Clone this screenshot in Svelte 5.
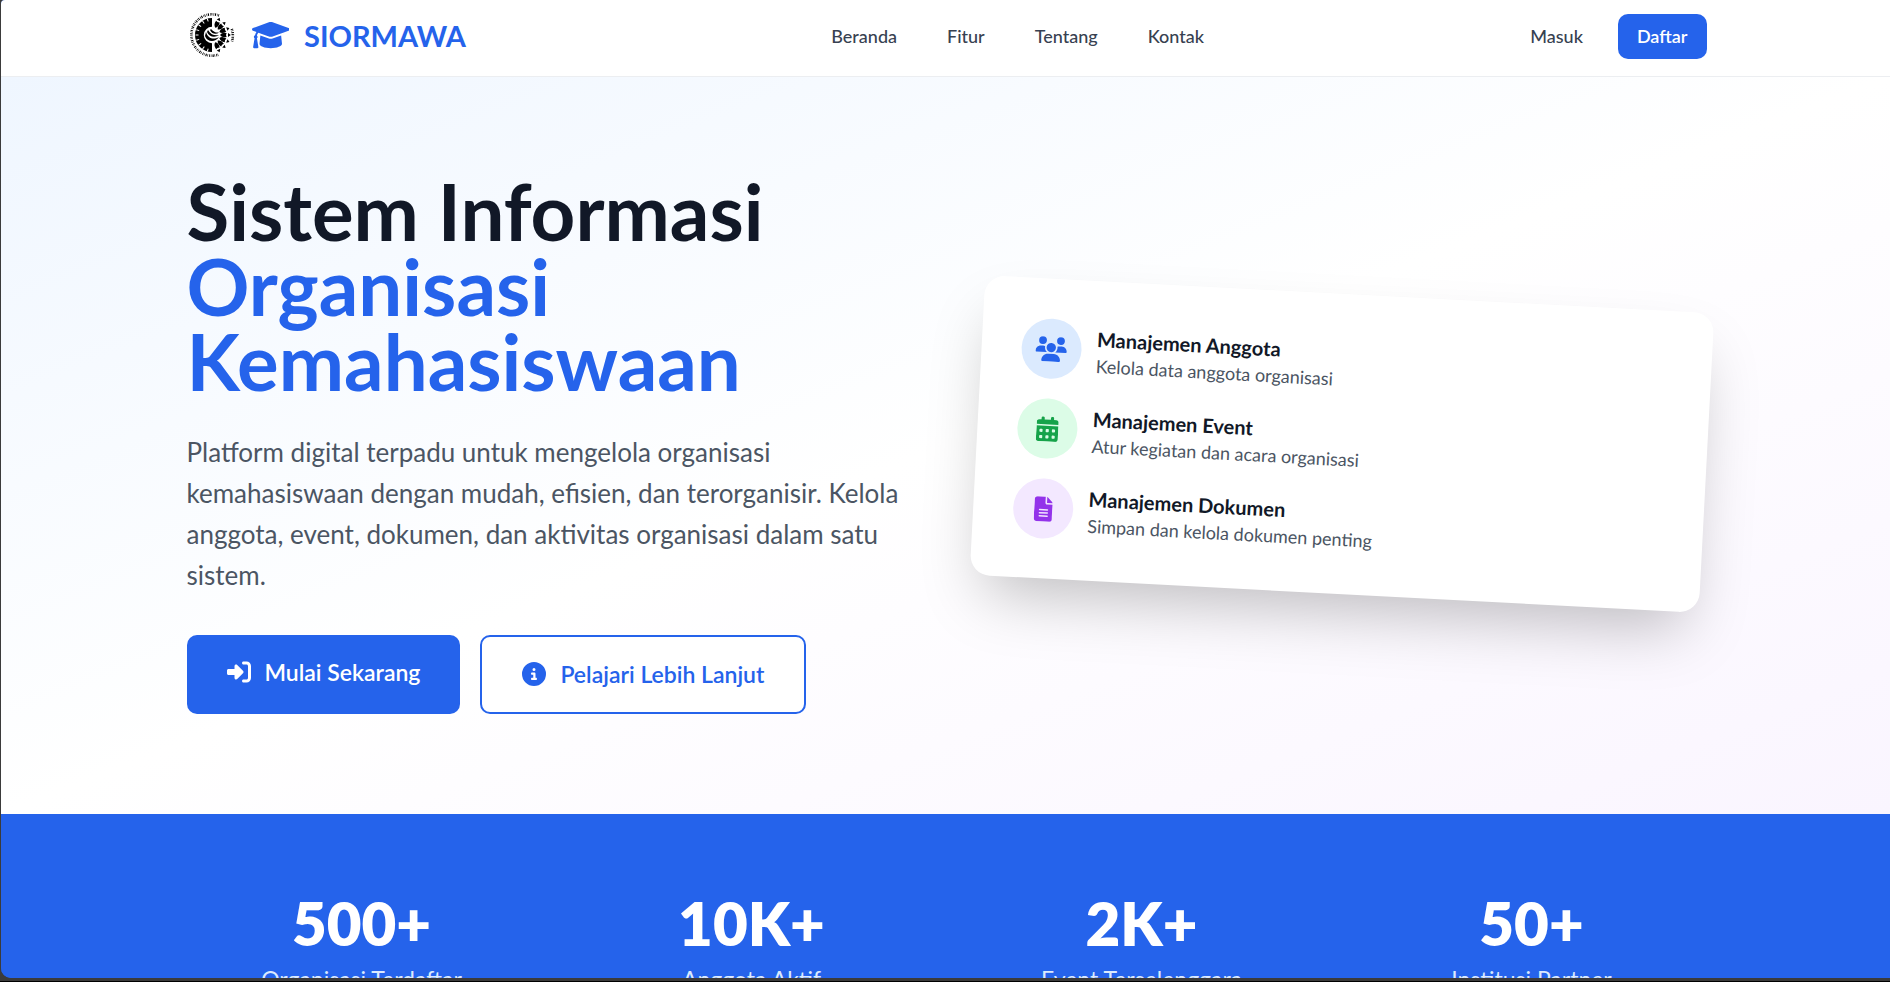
<script>
  const links = ['Beranda', 'Fitur', 'Tentang', 'Kontak'];

  const icons = {
    cap: {
      box: '0 0 640 512',
      d: 'M623.1 136.9l-282.7-101.2c-13.73-4.91-28.7-4.75-40.4 0L16.05 136.9C6.438 140.4 0 149.6 0 160s6.438 19.65 16.05 23.09L76.07 204.6c-11.89 15.8-20.26 34.16-24.55 53.95C40.05 263.4 32 274.8 32 288c0 9.953 4.814 18.49 11.94 24.36l-24.83 149C17.48 471.1 25 480 34.89 480H93.11c9.887 0 17.41-8.879 15.78-18.63l-24.83-149C91.19 306.5 96 297.1 96 288c0-10.29-5.174-19.03-12.72-24.89c4.252-17.76 12.88-33.82 24.94-47.03l190.6 68.23c13.73 4.91 28.7 4.75 42.4 0l282.7-101.2C633.6 179.6 640 170.4 640 160S633.6 140.4 623.1 136.9zM351.1 314.4C341.7 318.1 330.9 320 320 320c-10.92 0-21.69-1.867-32-5.555L142.8 262.5L128 405.3C128 446.6 213.1 480 320 480c105.1 0 192-33.4 192-74.67l-14.78-142.9L351.1 314.4z'
    },
    enter: {
      box: '0 0 512 512',
      d: 'M217.9 105.9L340.7 228.7c7.2 7.2 11.3 17.1 11.3 27.3s-4.1 20.1-11.3 27.3L217.9 406.1c-6.4 6.4-15 9.9-24 9.9c-18.7 0-33.9-15.2-33.9-33.9l0-62.1L32 320c-17.7 0-32-14.3-32-32l0-64c0-17.7 14.3-32 32-32l128 0 0-62.1c0-18.7 15.2-33.9 33.9-33.9c9 0 17.6 3.6 24 9.9zM352 416l64 0c17.7 0 32-14.3 32-32l0-256c0-17.7-14.3-32-32-32l-64 0c-17.7 0-32-14.3-32-32s14.3-32 32-32l64 0c53 0 96 43 96 96l0 256c0 53-43 96-96 96l-64 0c-17.7 0-32-14.3-32-32s14.3-32 32-32z'
    },
    info: {
      box: '0 0 512 512',
      d: 'M256 512A256 256 0 1 0 256 0a256 256 0 1 0 0 512zM216 336h24V272H216c-13.3 0-24-10.7-24-24s10.7-24 24-24h48c13.3 0 24 10.7 24 24v88h8c13.3 0 24 10.7 24 24s-10.7 24-24 24H216c-13.3 0-24-10.7-24-24s10.7-24 24-24zm40-208a32 32 0 1 1 0 64 32 32 0 1 1 0-64z'
    },
    users: {
      box: '0 0 640 512',
      d: 'M144 0a80 80 0 1 1 0 160A80 80 0 1 1 144 0zM512 0a80 80 0 1 1 0 160A80 80 0 1 1 512 0zM0 298.7C0 239.8 47.8 192 106.7 192h42.7c15.9 0 31 3.5 44.6 9.7c-1.3 7.2-1.9 14.7-1.9 22.3c0 38.2 16.8 72.5 43.3 96c-.2 0-.4 0-.7 0H21.3C9.6 320 0 310.4 0 298.7zM405.3 320c-.2 0-.4 0-.7 0c26.6-23.5 43.3-57.8 43.3-96c0-7.6-.7-15-1.9-22.3c13.6-6.3 28.7-9.7 44.6-9.7h42.7C592.2 192 640 239.8 640 298.7c0 11.8-9.6 21.3-21.3 21.3H405.3zM224 224a96 96 0 1 1 192 0 96 96 0 1 1 -192 0zM128 485.3C128 411.7 187.7 352 261.3 352H378.7C452.3 352 512 411.7 512 485.3c0 14.7-11.9 26.7-26.7 26.7H154.7c-14.7 0-26.7-11.9-26.7-26.7z'
    },
    calendar: {
      box: '0 0 448 512',
      d: 'M128 0c17.7 0 32 14.3 32 32V64H288V32c0-17.7 14.3-32 32-32s32 14.3 32 32V64h48c26.5 0 48 21.5 48 48v48H0V112C0 85.5 21.5 64 48 64H96V32c0-17.7 14.3-32 32-32zM0 192H448V464c0 26.5-21.5 48-48 48H48c-26.5 0-48-21.5-48-48zM64 272v32q0 16 16 16h32q16 0 16-16V272q0-16-16-16H80q-16 0-16 16zM192 272v32q0 16 16 16h32q16 0 16-16V272q0-16-16-16H208q-16 0-16 16zM320 272v32q0 16 16 16h32q16 0 16-16V272q0-16-16-16H336q-16 0-16 16zM64 400v32q0 16 16 16h32q16 0 16-16V400q0-16-16-16H80q-16 0-16 16zM192 400v32q0 16 16 16h32q16 0 16-16V400q0-16-16-16H208q-16 0-16 16zM320 400v32q0 16 16 16h32q16 0 16-16V400q0-16-16-16H336q-16 0-16 16z'
    },
    file: {
      box: '0 0 384 512',
      d: 'M64 0C28.7 0 0 28.7 0 64V448c0 35.3 28.7 64 64 64H320c35.3 0 64-28.7 64-64V160H256c-17.7 0-32-14.3-32-32V0zM256 0V128H384zM112 256H272a16 16 0 0 1 0 32H112a16 16 0 0 1 0-32zM112 320H272a16 16 0 0 1 0 32H112a16 16 0 0 1 0-32zM112 384H272a16 16 0 0 1 0 32H112a16 16 0 0 1 0-32z'
    }
  };

  const features = [
    { icon: 'users', tone: 'blue', title: 'Manajemen Anggota', text: 'Kelola data anggota organisasi' },
    { icon: 'calendar', tone: 'green', title: 'Manajemen Event', text: 'Atur kegiatan dan acara organisasi' },
    { icon: 'file', tone: 'purple', title: 'Manajemen Dokumen', text: 'Simpan dan kelola dokumen penting' }
  ];

  const stats = [
    { value: '500+', label: 'Organisasi Terdaftar' },
    { value: '10K+', label: 'Anggota Aktif' },
    { value: '2K+', label: 'Event Terselenggara' },
    { value: '50+', label: 'Institusi Partner' }
  ];

  // Petals of the emblem: closed on the left, spreading out on the right.
  const petals = [-66, -44, -22, 0, 22, 44, 66];
</script>

{#snippet icon(name)}
  <svg class="icon" viewBox={icons[name].box} aria-hidden="true">
    <path fill="currentColor" fill-rule="evenodd" d={icons[name].d} />
  </svg>
{/snippet}

<div class="window">
  <div class="page">
    <header>
      <div class="container bar">
        <a class="brand" href="#beranda">
          <svg class="emblem" viewBox="-25 -25 50 50" aria-hidden="true">
            <path d="M7 -19.5A20.7 20.7 0 1 0 7 19.5" fill="none" stroke="#000" stroke-width="2.6" stroke-dasharray=".8 .8 .5 1.1 1.1 .8 .6 1.2" />
            <path d="M19.8 -6A20.7 20.7 0 0 1 19.8 7" fill="none" stroke="#000" stroke-width="2.6" stroke-dasharray=".9 .8 .5 1 1.1 .8" />
            <path d="M0 -12.6A12.6 12.6 0 1 0 0 12.6" fill="none" stroke="#000" stroke-width="8.8" />
            <path d="M1 -16A16 16 0 1 0 1 16" fill="none" stroke="#fff" stroke-width="3" stroke-dasharray="1 3.9" />
            {#each petals as a}
              <g transform="rotate({a})">
                <path d="M8 0Q10 -3 14.6 -2Q13.4 0 14.6 2Q10 3 8 0Z" />
                <path d="M16 -1.9L18.8 0L16 1.9Z" />
              </g>
            {/each}
            <path d="M-6 -3C-4 4 2 5 7 2C3 8 -5 7 -7 1ZM-4 -5C-1 0 3 1 7 0C3 3 -3 2 -5 -3ZM-1 -6C2 -3 4 -2 7 -2.5C4 0 0 -1 -2 -5Z" />
          </svg>
          <span class="cap">{@render icon('cap')}</span>
          <span>SIORMAWA</span>
        </a>
        <nav>
          {#each links as link}
            <a href="#{link.toLowerCase()}">{link}</a>
          {/each}
        </nav>
        <div class="account">
          <a class="login" href="#masuk">Masuk</a>
          <a class="register" href="#daftar">Daftar</a>
        </div>
      </div>
    </header>

    <section class="hero">
      <div class="container columns">
        <div>
          <h1>Sistem Informasi <span>Organisasi Kemahasiswaan</span></h1>
          <p class="lead">
            Platform digital terpadu untuk mengelola organisasi kemahasiswaan dengan mudah, efisien, dan
            terorganisir. Kelola anggota, event, dokumen, dan aktivitas organisasi dalam satu sistem.
          </p>
          <div class="actions">
            <a class="action primary" href="#masuk">{@render icon('enter')}Mulai Sekarang</a>
            <a class="action outline" href="#fitur">{@render icon('info')}Pelajari Lebih Lanjut</a>
          </div>
        </div>
        <div class="card">
          {#each features as f}
            <div class="feature">
              <div class="badge {f.tone}">{@render icon(f.icon)}</div>
              <div>
                <h3>{f.title}</h3>
                <p>{f.text}</p>
              </div>
            </div>
          {/each}
        </div>
      </div>
    </section>

    <section class="stats">
      <div class="container figures">
        {#each stats as s}
          <div>
            <div class="value">{s.value}</div>
            <div class="label">{s.label}</div>
          </div>
        {/each}
      </div>
    </section>
  </div>
</div>

<style>
  :global(body) {
    margin: 0;
    background: #000;
  }
  .window {
    box-sizing: border-box;
    height: 100vh;
    padding: 0 0 3px 1px;
    border-bottom: 1px solid #000;
    background: #3b3b3b;
    font-family: Lato, 'Open Sans', sans-serif;
    color: #111827;
  }
  .page {
    height: 100%;
    overflow: hidden;
    display: flex;
    flex-direction: column;
    border-radius: 4px 0 0 10px;
    background: #2563eb;
  }
  .container {
    box-sizing: border-box;
    width: 100%;
    max-width: 1600px;
    margin: 0 auto;
    padding: 0 39px 0 41px;
  }
  a {
    color: inherit;
    text-decoration: none;
  }
  h1, h3, p {
    margin: 0;
  }
  .icon {
    display: block;
    height: 1em;
    width: auto;
  }

  header {
    flex: none;
    background: #fff;
    border-bottom: 1px solid #eceef1;
  }
  .bar {
    display: flex;
    align-items: center;
    justify-content: space-between;
    padding-top: 14px;
    padding-bottom: 17px;
    font-size: 18px;
    line-height: 25px;
    font-weight: 500;
    color: #374151;
  }
  .brand {
    display: flex;
    align-items: center;
    height: 42px;
    padding-bottom: 3px;
    font-size: 29px;
    font-weight: 700;
    color: #2563eb;
  }
  .emblem {
    width: 50px;
    height: 50px;
    margin-right: 15px;
  }
  .cap {
    margin-right: 15px;
    font-size: 30px;
  }
  nav {
    display: flex;
    gap: 50px;
    margin-left: 54px;
  }
  .account {
    display: flex;
    align-items: center;
    gap: 20px;
  }
  .login {
    padding: 10px 15px;
  }
  .register {
    padding: 10px 19px;
    border-radius: 10px;
    background: #2563eb;
    color: #fff;
    font-weight: 600;
  }

  .hero {
    flex: none;
    padding: 97px 0 100px;
    background: linear-gradient(to bottom right, #eff6ff, #fff, #faf5ff);
  }
  .columns {
    display: grid;
    grid-template-columns: 1fr 1fr;
    gap: 60px;
    align-items: center;
  }
  h1 {
    font-size: 78px;
    line-height: 75px;
    font-weight: 700;
  }
  h1 span {
    color: #2563eb;
  }
  .lead {
    margin: 33px 0 39px;
    font-size: 26px;
    line-height: 41px;
    color: #4b5563;
  }
  .actions {
    display: flex;
    gap: 20px;
  }
  .action {
    display: flex;
    align-items: flex-start;
    gap: 14px;
    padding: 22px 40px;
    border-radius: 10px;
    font-size: 23px;
    line-height: 31px;
    font-weight: 600;
  }
  .action .icon {
    height: 24px;
    margin-top: 3px;
  }
  .primary {
    background: #2563eb;
    color: #fff;
  }
  .outline {
    border: 2px solid #2563eb;
    background: #fff;
    color: #2563eb;
  }
  .card {
    display: flex;
    flex-direction: column;
    gap: 20px;
    padding: 40px;
    border-radius: 20px;
    background: #fff;
    box-shadow: 0 31px 62px -15px rgb(0 0 0 / 0.25);
    transform: rotate(3deg);
  }
  .feature {
    display: flex;
    align-items: center;
    gap: 15px;
  }
  .badge {
    display: flex;
    align-items: center;
    justify-content: center;
    width: 60px;
    height: 60px;
    border-radius: 50%;
    font-size: 25px;
  }
  .blue {
    background: #dbeafe;
    color: #2563eb;
  }
  .green {
    background: #dcfce7;
    color: #16a34a;
  }
  .purple {
    background: #f3e8ff;
    color: #9333ea;
  }
  h3 {
    font-size: 20px;
    line-height: 30px;
    font-weight: 700;
  }
  .feature p {
    font-size: 18px;
    line-height: 25px;
    color: #4b5563;
  }

  .stats {
    flex: none;
    padding: 79px 0 80px;
    background: #2563eb;
    text-align: center;
  }
  .figures {
    display: grid;
    grid-template-columns: repeat(4, 1fr);
    gap: 40px;
  }
  .value {
    margin-bottom: 9px;
    font-size: 60px;
    line-height: 60px;
    font-weight: 800;
    color: #fff;
  }
  .label {
    font-size: 23px;
    line-height: 35px;
    color: #dbeafe;
  }
</style>
